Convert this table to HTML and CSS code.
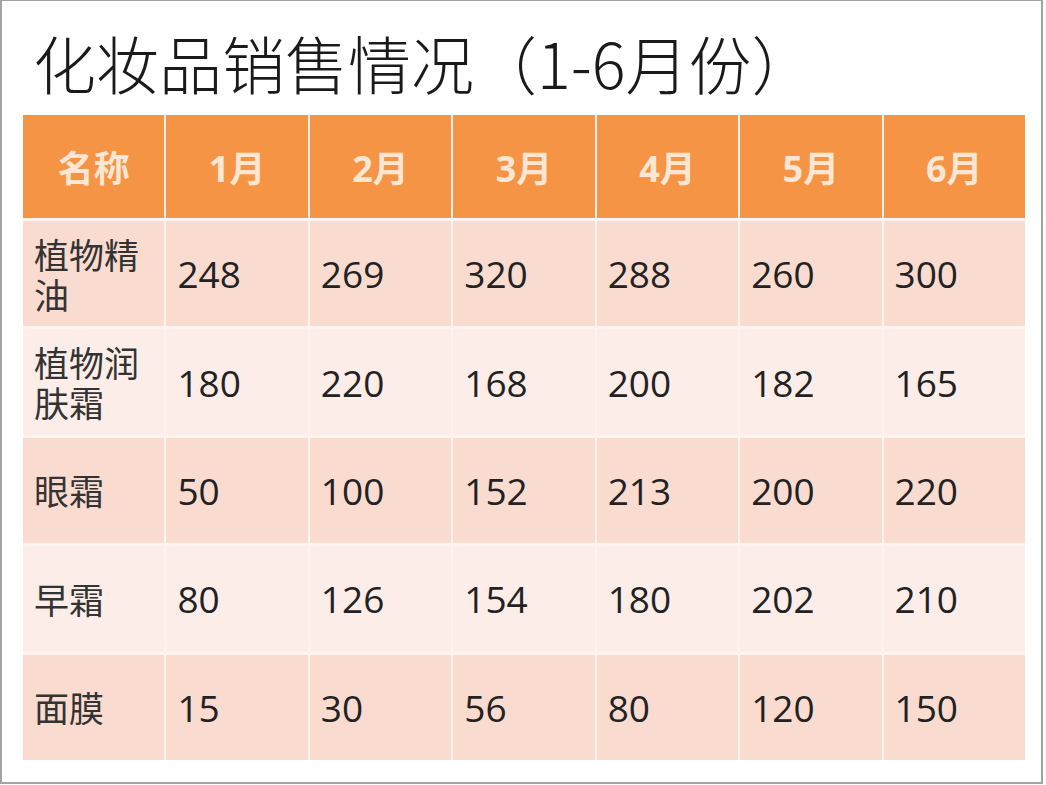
FILE: index.html
```html
<!DOCTYPE html>
<html lang="zh-CN">
<head>
<meta charset="utf-8">
<title>化妆品销售情况</title>
<link rel="stylesheet" href="styles.css">
</head>
<body>
<div class="frame">
  <h1 class="title">化妆品销售情况（1-6月份）</h1>
  <div class="table">
    <div class="th">名称</div><div class="th">1月</div><div class="th">2月</div><div class="th">3月</div><div class="th">4月</div><div class="th">5月</div><div class="th">6月</div>

    <div class="td name odd">植物精油</div><div class="td odd">248</div><div class="td odd">269</div><div class="td odd">320</div><div class="td odd">288</div><div class="td odd">260</div><div class="td odd">300</div>

    <div class="td name even">植物润肤霜</div><div class="td even">180</div><div class="td even">220</div><div class="td even">168</div><div class="td even">200</div><div class="td even">182</div><div class="td even">165</div>

    <div class="td name odd">眼霜</div><div class="td odd">50</div><div class="td odd">100</div><div class="td odd">152</div><div class="td odd">213</div><div class="td odd">200</div><div class="td odd">220</div>

    <div class="td name even">早霜</div><div class="td even">80</div><div class="td even">126</div><div class="td even">154</div><div class="td even">180</div><div class="td even">202</div><div class="td even">210</div>

    <div class="td name odd">面膜</div><div class="td odd">15</div><div class="td odd">30</div><div class="td odd">56</div><div class="td odd">80</div><div class="td odd">120</div><div class="td odd">150</div>
  </div>
</div>
</body>
</html>
```

FILE: styles.css
```css
html, body {
  margin: 0;
  padding: 0;
  background: #ffffff;
}

.frame {
  box-sizing: border-box;
  width: 1043px;
  height: 784px;
  border: 2px solid #a3a3a3;
  border-top-width: 1px;
  padding: 29px 0 0 21px;
  background: #ffffff;
}

.title {
  margin: 0;
  padding-left: 10px;
  height: 64px;
  font-family: "Noto Sans CJK SC", sans-serif;
  font-weight: 300;
  font-size: 63px;
  line-height: 64px;
  color: #1a1a1a;
  white-space: nowrap;
}

.table {
  margin-top: 21px;
  width: 1002px;
  height: 645px;
  display: grid;
  grid-template-columns: repeat(7, 1fr);
  grid-template-rows: 103px repeat(5, 1fr);
  column-gap: 2px;
  row-gap: 3px;
  background: #fdf3ef;
}

.th {
  background: #f69446;
  color: #fde7d4;
  font-family: "Open Sans", "Noto Sans CJK SC", sans-serif;
  font-weight: 700;
  font-size: 36px;
  display: flex;
  align-items: center;
  justify-content: center;
}

.td {
  display: flex;
  align-items: center;
  padding-left: 11px;
  padding-right: 6px;
  font-family: "Open Sans", "Noto Sans CJK SC", sans-serif;
  font-size: 37px;
  color: #222222;
}

.name {
  font-family: "Noto Sans CJK SC", sans-serif;
  font-size: 35px;
  line-height: 40px;
  color: #333333;
}

.odd {
  background: #fadbd0;
}

.even {
  background: #fcede9;
}
```
